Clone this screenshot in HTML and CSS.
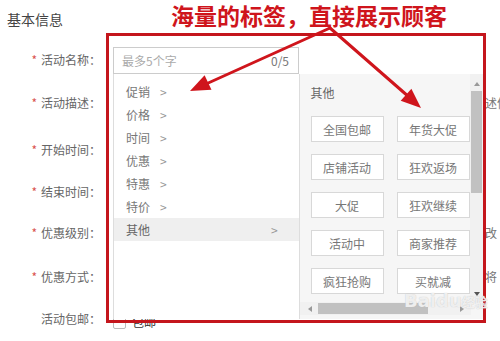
FILE: index.html
```html
<!DOCTYPE html>
<html lang="zh-CN">
<head>
    <meta charset="UTF-8">
    <meta name="viewport" content="width=device-width, initial-scale=1.0">
    <title>基本信息</title>
    <link rel="stylesheet" href="styles.css">
</head>
<body>
    <div class="page">
        <h2 class="title">基本信息</h2>

        <div class="form">
            <div class="row row-name"><label class="req">活动名称：</label></div>
            <div class="row row-desc"><label class="req">活动描述：</label><span class="behind">述信</span></div>
            <div class="row row-start"><label class="req">开始时间：</label></div>
            <div class="row row-end"><label class="req">结束时间：</label></div>
            <div class="row row-level"><label class="req">优惠级别：</label><span class="behind">改</span></div>
            <div class="row row-way"><label class="req">优惠方式：</label><span class="behind">将</span></div>
            <div class="row row-free"><label>活动包邮：</label><span class="check"></span><span class="check-text">包邮</span></div>
        </div>

        <!-- tag picker popup -->
        <div class="picker">
            <div class="picker-input">
                <span class="placeholder">最多5个字</span>
                <span class="count">0/5</span>
            </div>
            <div class="picker-body">
                <ul class="cat-list">
                    <li>促销<i>&gt;</i></li>
                    <li>价格<i>&gt;</i></li>
                    <li>时间<i>&gt;</i></li>
                    <li>优惠<i>&gt;</i></li>
                    <li>特惠<i>&gt;</i></li>
                    <li>特价<i>&gt;</i></li>
                    <li class="active">其他<i>&gt;</i></li>
                </ul>
                <div class="tag-panel">
                    <div class="tag-view">
                        <div class="tag-content">
                            <div class="tag-head">其他</div>
                            <div class="tag-grid">
                                <span class="tag">全国包邮</span>
                                <span class="tag">年货大促</span>
                                <span class="tag">店铺活动</span>
                                <span class="tag">狂欢返场</span>
                                <span class="tag">大促</span>
                                <span class="tag">狂欢继续</span>
                                <span class="tag">活动中</span>
                                <span class="tag">商家推荐</span>
                                <span class="tag">疯狂抢购</span>
                                <span class="tag">买就减</span>
                            </div>
                        </div>
                        <div class="vscroll">
                            <span class="arrow-up"></span>
                            <span class="vthumb"></span>
                            <span class="arrow-down"></span>
                        </div>
                    </div>
                    <div class="hscroll">
                        <span class="arrow-left"></span>
                        <span class="hthumb"></span>
                        <span class="arrow-right"></span>
                    </div>
                </div>
            </div>
        </div>

        <!-- annotation -->
        <div class="mark-box"></div>
        <div class="mark-title">海量的标签，直接展示顾客</div>
        <svg class="mark-arrows" width="500" height="341" viewBox="0 0 500 341">
            <g stroke="#cf151c" stroke-width="3" fill="none" stroke-linecap="round">
                <line x1="330" y1="28" x2="206" y2="84"/>
                <line x1="330" y1="28" x2="409" y2="97"/>
            </g>
            <g fill="#cf151c">
                <polygon points="190,91 211.5,89.7 204.6,75.2"/>
                <polygon points="421,108 400.7,100.7 411.4,88.7"/>
            </g>
        </svg>
        <div class="watermark">Baidu<span>经验</span></div>
    </div>
</body>
</html>
```

FILE: styles.css
```css
body {
    margin: 0;
    background: #fff;
    font-family: "Noto Sans CJK SC", "Noto Sans", sans-serif;
    color: #333;
}
.page {
    position: relative;
    width: 500px;
    height: 341px;
    overflow: hidden;
}
.title {
    margin: 0;
    padding: 9px 0 0 7px;
    height: 22px;
    font-size: 14px;
    font-weight: normal;
    line-height: 20px;
    color: #444;
}
.form {
    display: flex;
    flex-direction: column;
}
.row {
    display: flex;
    align-items: center;
    height: 20px;
    font-size: 12px;
    color: #666;
}
.row-name { margin-top: 18px; }
.row-desc { margin-top: 23px; }
.row-start { margin-top: 27px; }
.row-end { margin-top: 22px; }
.row-level { margin-top: 21px; }
.row-way { margin-top: 24px; }
.row-free { margin-top: 22px; }
.row label {
    width: 101px;
    text-align: right;
    flex: none;
}
.req::before {
    content: "*";
    color: #d9534f;
    margin-right: 4px;
}
.behind {
    margin-left: 384px;
    white-space: nowrap;
    color: #777;
}
.check {
    margin: 8px 0 0 12px;
    width: 11px;
    height: 11px;
    border: 1px solid #bbb;
    border-radius: 2px;
}
.check-text {
    margin: 6px 0 0 6px;
    color: #333;
}

/* popup */
.picker {
    position: absolute;
    left: 113px;
    top: 47px;
    width: 370px;
}
.picker-input {
    display: flex;
    justify-content: space-between;
    align-items: center;
    box-sizing: border-box;
    width: 186px;
    height: 27px;
    padding: 0 9px 0 8px;
    border: 1px solid #ccc;
    background: #fff;
    font-size: 12px;
}
.placeholder {
    color: #aaa;
}
.count {
    color: #777;
}
.picker-body {
    display: flex;
    height: 245px;
    border-left: 1px solid #ddd;
    background: #fff;
}
.cat-list {
    list-style: none;
    margin: 0;
    padding: 6px 0 0;
    width: 185px;
    font-size: 12px;
    color: #777;
}
.cat-list li {
    display: flex;
    align-items: center;
    height: 23px;
    padding-left: 12px;
}
.cat-list i {
    font-style: normal;
    margin-left: 10px;
    color: #999;
}
.cat-list li.active {
    background: #efefef;
    color: #666;
}
.cat-list li.active i {
    margin-left: 121px;
}
.tag-panel {
    display: flex;
    flex-direction: column;
    width: 184px;
    border-left: 1px solid #ddd;
    background: #f6f6f6;
}
.tag-view {
    display: flex;
    height: 228px;
    overflow: hidden;
}
.tag-content {
    flex: 1;
    padding: 9px 0 0 11px;
    overflow: hidden;
}
.tag-head {
    font-size: 12px;
    line-height: 20px;
    color: #666;
}
.tag-grid {
    display: grid;
    grid-template-columns: 73px 73px;
    column-gap: 13px;
    row-gap: 12px;
    margin-top: 13px;
}
.tag {
    display: flex;
    align-items: center;
    justify-content: center;
    height: 24px;
    border: 1px solid #d8d8d8;
    background: #fff;
    font-size: 12px;
    color: #777;
}
.vscroll {
    display: flex;
    flex-direction: column;
    align-items: center;
    width: 13px;
    background: #f1f1f1;
}
.arrow-up, .arrow-down, .arrow-left, .arrow-right {
    width: 0;
    height: 0;
    border: 3px solid transparent;
}
.arrow-up {
    margin-top: 5px;
    border-bottom: 4px solid #999;
}
.vthumb {
    margin-top: 5px;
    width: 11px;
    height: 102px;
    background: #c1c1c1;
}
.arrow-down {
    margin-top: auto;
    margin-bottom: 3px;
    border-top: 4px solid #555;
}
.hscroll {
    display: flex;
    align-items: center;
    height: 13px;
    width: 171px;
    background: #f1f1f1;
}
.arrow-left {
    margin-left: 5px;
    border-right: 4px solid #999;
}
.hthumb {
    margin-left: 6px;
    width: 110px;
    height: 11px;
    background: #c1c1c1;
}
.arrow-right {
    margin-left: auto;
    margin-right: 4px;
    border-left: 4px solid #999;
}

/* annotation */
.mark-box {
    position: absolute;
    left: 106px;
    top: 33px;
    width: 374px;
    height: 284px;
    border: 3px solid #c4161c;
}
.mark-title {
    position: absolute;
    left: 171px;
    top: 0;
    font-size: 23px;
    font-weight: bold;
    line-height: 30px;
    color: #cf151c;
    white-space: nowrap;
}
.mark-arrows {
    position: absolute;
    left: 0;
    top: 0;
}
.watermark {
    position: absolute;
    left: 404px;
    top: 290px;
    font-family: "DejaVu Sans", sans-serif;
    font-size: 18px;
    font-weight: bold;
    color: rgba(255, 255, 255, 0.75);
    text-shadow: 0 0 1px #bbb;
}
.watermark span {
    font-size: 13px;
    font-family: "Noto Sans CJK SC", sans-serif;
}
```
